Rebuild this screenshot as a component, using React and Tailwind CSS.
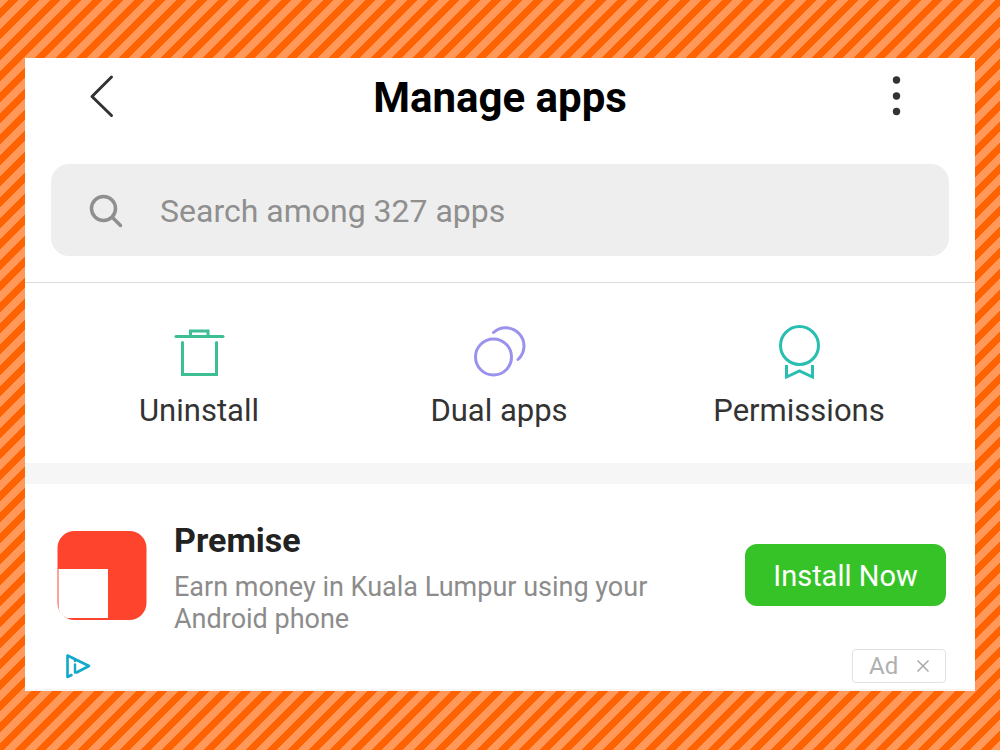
const shortcuts = [
  { label: 'Uninstall', Icon: TrashIcon },
  { label: 'Dual apps', Icon: DualIcon },
  { label: 'Permissions', Icon: BadgeIcon },
];

function BackIcon() {
  return (
    <svg viewBox="0 0 28 44" className="h-11 w-7" fill="none" stroke="#333" strokeWidth="3" strokeLinecap="round" strokeLinejoin="round" aria-hidden="true">
      <path d="M24.500 3 5 22.500 24.500 41.500" />
    </svg>
  );
}

function TrashIcon() {
  return (
    <svg viewBox="0 0 60 60" className="size-15" fill="none" stroke="#3dbe95" strokeWidth="3" strokeLinecap="round" aria-hidden="true">
      <path d="M7 15.500h47" />
      <path d="M21.500 15V10h17.500V15" />
      <path d="M13.500 21.500V53.500h34V21.500" />
    </svg>
  );
}

function DualIcon() {
  return (
    <svg viewBox="0 0 60 60" className="size-15" fill="none" stroke="#9a92ec" strokeWidth="3" aria-hidden="true">
      <circle cx="24.500" cy="36" r="18" />
      <path d="M24.500 11.500A18 18 0 0 1 49 38.500" strokeLinecap="round" />
    </svg>
  );
}

function BadgeIcon() {
  return (
    <svg viewBox="0 0 60 60" className="size-15" fill="none" stroke="#28beb2" strokeWidth="3" aria-hidden="true">
      <circle cx="30.500" cy="24.500" r="19" />
      <path d="M17.500 44v12L30.500 50l13 6V44" />
    </svg>
  );
}

export default function App() {
  return (
    <div className="min-h-screen bg-[linear-gradient(135deg,#ff9859_20%,#ff6200_20%_45%,#ff9859_45%_70%,#ff6200_70%_95%,#ff9859_95%)] bg-[size:21px_21px] px-[25px] pt-[58px] pb-[59px] font-[Roboto,sans-serif] text-[#333]">
      <main className="border-b-2 border-[#f5f5f7] bg-white">
        <header className="flex h-[106px] items-start justify-between pt-4 pr-[50px] pl-[62px]">
          <button type="button" aria-label="Back" className="flex h-11 w-11 items-center">
            <BackIcon />
          </button>
          <h1 className="text-[42px] leading-[48px] font-bold text-black">Manage apps</h1>
          <button type="button" aria-label="More options" className="flex h-11 w-14 items-center justify-center">
            <svg viewBox="0 0 12 44" className="h-11 w-3" fill="#333" aria-hidden="true">
              <circle cx="5.500" cy="6" r="3.700" />
              <circle cx="5.500" cy="22" r="3.700" />
              <circle cx="5.500" cy="37.500" r="3.700" />
            </svg>
          </button>
        </header>

        <div className="border-b border-[#dcdcdc] px-[26px] pb-[26px]">
          <label className="flex h-[92px] items-center gap-9 rounded-[18px] bg-[#eee] pl-[37px]">
            <svg viewBox="0 0 36 36" className="size-9 shrink-0" fill="none" stroke="#8f8f8f" strokeWidth="3.500" strokeLinecap="round" aria-hidden="true">
              <circle cx="15.500" cy="16.500" r="12" />
              <path d="m24.500 25.500 8 8" />
            </svg>
            <input type="search" aria-label="Search apps" placeholder="Search among 327 apps" className="min-w-0 flex-1 bg-transparent pt-0.5 text-[32px] text-[#333] outline-none placeholder:text-[#8f8f8f]" />
          </label>
        </div>

        <nav className="grid h-[180px] grid-cols-3 pt-[38px] pr-[26px] pl-6">
          {shortcuts.map(({ label, Icon }) => (
            <button key={label} type="button" className="flex flex-col items-center gap-2 self-start text-[31px] leading-[43px]">
              <Icon />
              {label}
            </button>
          ))}
        </nav>

        <section className="border-t-[21px] border-[#f6f6f6] pt-[35px] pr-[29px] pl-8" aria-label="Sponsored app">
          <div className="flex items-start">
            <svg viewBox="0 0 90 90" className="mt-3 size-[90px] shrink-0" aria-hidden="true">
              <rect x="0.500" y="0" width="89" height="89" rx="17" fill="#ff442d" />
              <path d="M1.500 38H51V87H10Q1.500 84 1.500 74Z" fill="#fff" />
            </svg>
            <div className="ml-[27px] min-w-0 flex-1">
              <h2 className="text-[34px] leading-[42px] font-bold text-[#222]">Premise</h2>
              <p className="mt-2.5 max-w-[500px] text-[27px] leading-8 text-[#8c8c8c]">Earn money in Kuala Lumpur using your Android phone</p>
            </div>
            <button type="button" className="mt-[25px] h-[62px] w-[201px] shrink-0 rounded-xl bg-[#36c327] pt-1 text-[29px] text-white">Install Now</button>
          </div>
          <div className="mt-3.5 flex items-center justify-between pb-1.5">
            <a href="#adchoices" aria-label="AdChoices" className="ml-2">
              <svg viewBox="0 0 26 26" className="size-[26px]" fill="none" stroke="#11a9ca" strokeWidth="2.600" strokeLinejoin="round" strokeLinecap="round" aria-hidden="true">
                <path d="M6.500 22 2.500 24V2.500L24 13 11.500 19.500" />
                <path d="M10 11.500v8" strokeWidth="2.400" />
                <circle cx="10" cy="7.800" r="1.400" fill="#11a9ca" stroke="none" />
              </svg>
            </a>
            <button type="button" aria-label="Close ad" className="flex h-[34px] w-[94px] items-center justify-between rounded-sm border border-[#e2e2e2] px-4 text-[24px] text-[#b0b0b0]">
              Ad
              <svg viewBox="0 0 12 12" className="size-3" stroke="#aaa" strokeWidth="1.500" aria-hidden="true">
                <path d="m.5.5 11 11m0-11-11 11" />
              </svg>
            </button>
          </div>
        </section>
      </main>
    </div>
  );
}
